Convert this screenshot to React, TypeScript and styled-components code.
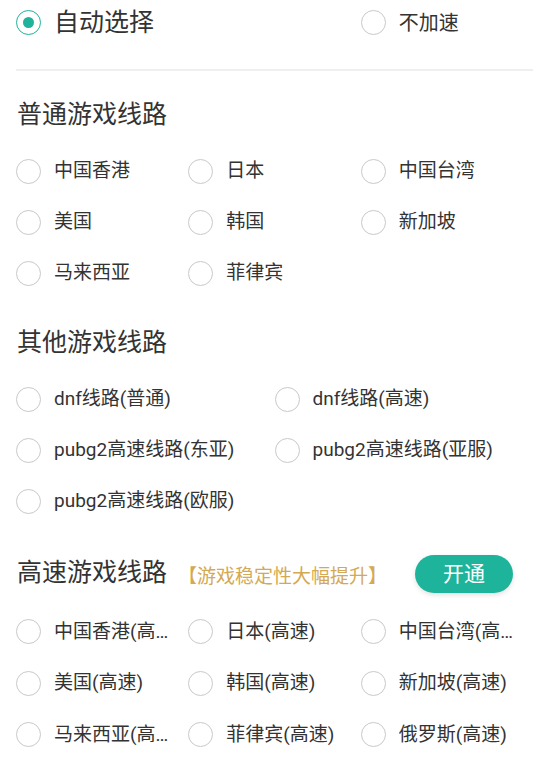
import React from "react";
import styled, { createGlobalStyle } from "styled-components";

const GlobalStyle = createGlobalStyle`
  html, body {
    margin: 0;
    padding: 0;
    background: #ffffff;
  }
  body {
    font-family: Roboto, "Noto Sans CJK SC", sans-serif;
    color: #333333;
  }
`;

const TEAL = "#1db49b";
const FONT = `Roboto, "Noto Sans CJK SC", sans-serif`;

const Page = styled.div`
  width: 550px;
  box-sizing: border-box;
  padding: 0 17px 0 16px;
  background: #fff;
`;

const Grid = styled.div<{ $cols: number }>`
  display: grid;
  grid-template-columns: repeat(${(p) => p.$cols}, 1fr);
`;

const TopRow = styled(Grid)`
  height: 45px;
`;

const Option = styled.label<{ $span?: number; $rowHeight: number }>`
  display: flex;
  align-items: center;
  height: ${(p) => p.$rowHeight}px;
  padding-right: 18px;
  min-width: 0;
  grid-column: span ${(p) => p.$span ?? 1};
  cursor: pointer;
`;

const Radio = styled.span<{ $checked?: boolean }>`
  flex: none;
  box-sizing: border-box;
  width: 25px;
  height: 25px;
  border-radius: 50%;
  border: 1.5px solid ${(p) => (p.$checked ? TEAL : "#c9c9c9")};
  display: flex;
  align-items: center;
  justify-content: center;
  &::after {
    content: "";
    display: ${(p) => (p.$checked ? "block" : "none")};
    width: 11px;
    height: 11px;
    border-radius: 50%;
    background: ${TEAL};
  }
`;

const Label = styled.span<{ $size: number }>`
  margin-left: 13px;
  font-size: ${(p) => p.$size}px;
  line-height: 1.6;
  color: #333;
  white-space: nowrap;
  overflow: hidden;
  text-overflow: ellipsis;
  min-width: 0;
`;

const Divider = styled.div`
  height: 2px;
  background: #efefef;
  margin-top: 24px;
`;

const Section = styled.section`
  padding-top: 15px;
`;

const HeadingRow = styled.div<{ $height: number }>`
  display: flex;
  align-items: center;
  height: ${(p) => p.$height}px;
`;

const Heading = styled.h2`
  margin: 0 0 1px 1px;
  font-size: 25px;
  font-weight: 400;
  color: #333;
  line-height: 1.3;
`;

const Promo = styled.span`
  margin-left: 11px;
  font-size: 19px;
  color: #d4a953;
  white-space: nowrap;
`;

const OpenButton = styled.button`
  margin-left: auto;
  margin-right: 20px;
  width: 98px;
  height: 38px;
  border: none;
  border-radius: 19px;
  background: ${TEAL};
  color: #fff;
  font-family: ${FONT};
  font-size: 21px;
  line-height: 1;
  box-shadow: 0 2px 5px rgba(0, 0, 0, 0.12);
  cursor: pointer;
`;

type Opt = { label: string; checked?: boolean };

const normal: Opt[] = [
  { label: "中国香港" },
  { label: "日本" },
  { label: "中国台湾" },
  { label: "美国" },
  { label: "韩国" },
  { label: "新加坡" },
  { label: "马来西亚" },
  { label: "菲律宾" },
];

const other: Opt[] = [
  { label: "dnf线路(普通)" },
  { label: "dnf线路(高速)" },
  { label: "pubg2高速线路(东亚)" },
  { label: "pubg2高速线路(亚服)" },
  { label: "pubg2高速线路(欧服)" },
];

const fast: Opt[] = [
  { label: "中国香港(高速)" },
  { label: "日本(高速)" },
  { label: "中国台湾(高速)" },
  { label: "美国(高速)" },
  { label: "韩国(高速)" },
  { label: "新加坡(高速)" },
  { label: "马来西亚(高速)" },
  { label: "菲律宾(高速)" },
  { label: "俄罗斯(高速)" },
];

const OptionGrid: React.FC<{ items: Opt[]; cols: number; rowHeight?: number }> = ({
  items,
  cols,
  rowHeight = 51,
}) => (
  <Grid $cols={cols}>
    {items.map((o) => (
      <Option key={o.label} $rowHeight={rowHeight}>
        <Radio $checked={o.checked} />
        <Label $size={19}>{o.label}</Label>
      </Option>
    ))}
  </Grid>
);

export default function App() {
  return (
    <>
      <GlobalStyle />
      <Page>
        <TopRow $cols={3}>
          <Option $span={2} $rowHeight={45}>
            <Radio $checked />
            <Label $size={25}>自动选择</Label>
          </Option>
          <Option $rowHeight={45}>
            <Radio />
            <Label $size={20}>不加速</Label>
          </Option>
        </TopRow>
        <Divider />

        <Section>
          <HeadingRow $height={60}>
            <Heading>普通游戏线路</Heading>
          </HeadingRow>
          <OptionGrid items={normal} cols={3} />
        </Section>

        <Section>
          <HeadingRow $height={60}>
            <Heading>其他游戏线路</Heading>
          </HeadingRow>
          <OptionGrid items={other} cols={2} />
        </Section>

        <Section>
          <HeadingRow $height={64}>
            <Heading>高速游戏线路</Heading>
            <Promo>【游戏稳定性大幅提升】</Promo>
            <OpenButton>开通</OpenButton>
          </HeadingRow>
          <OptionGrid items={fast} cols={3} rowHeight={51.5} />
        </Section>
      </Page>
    </>
  );
}
